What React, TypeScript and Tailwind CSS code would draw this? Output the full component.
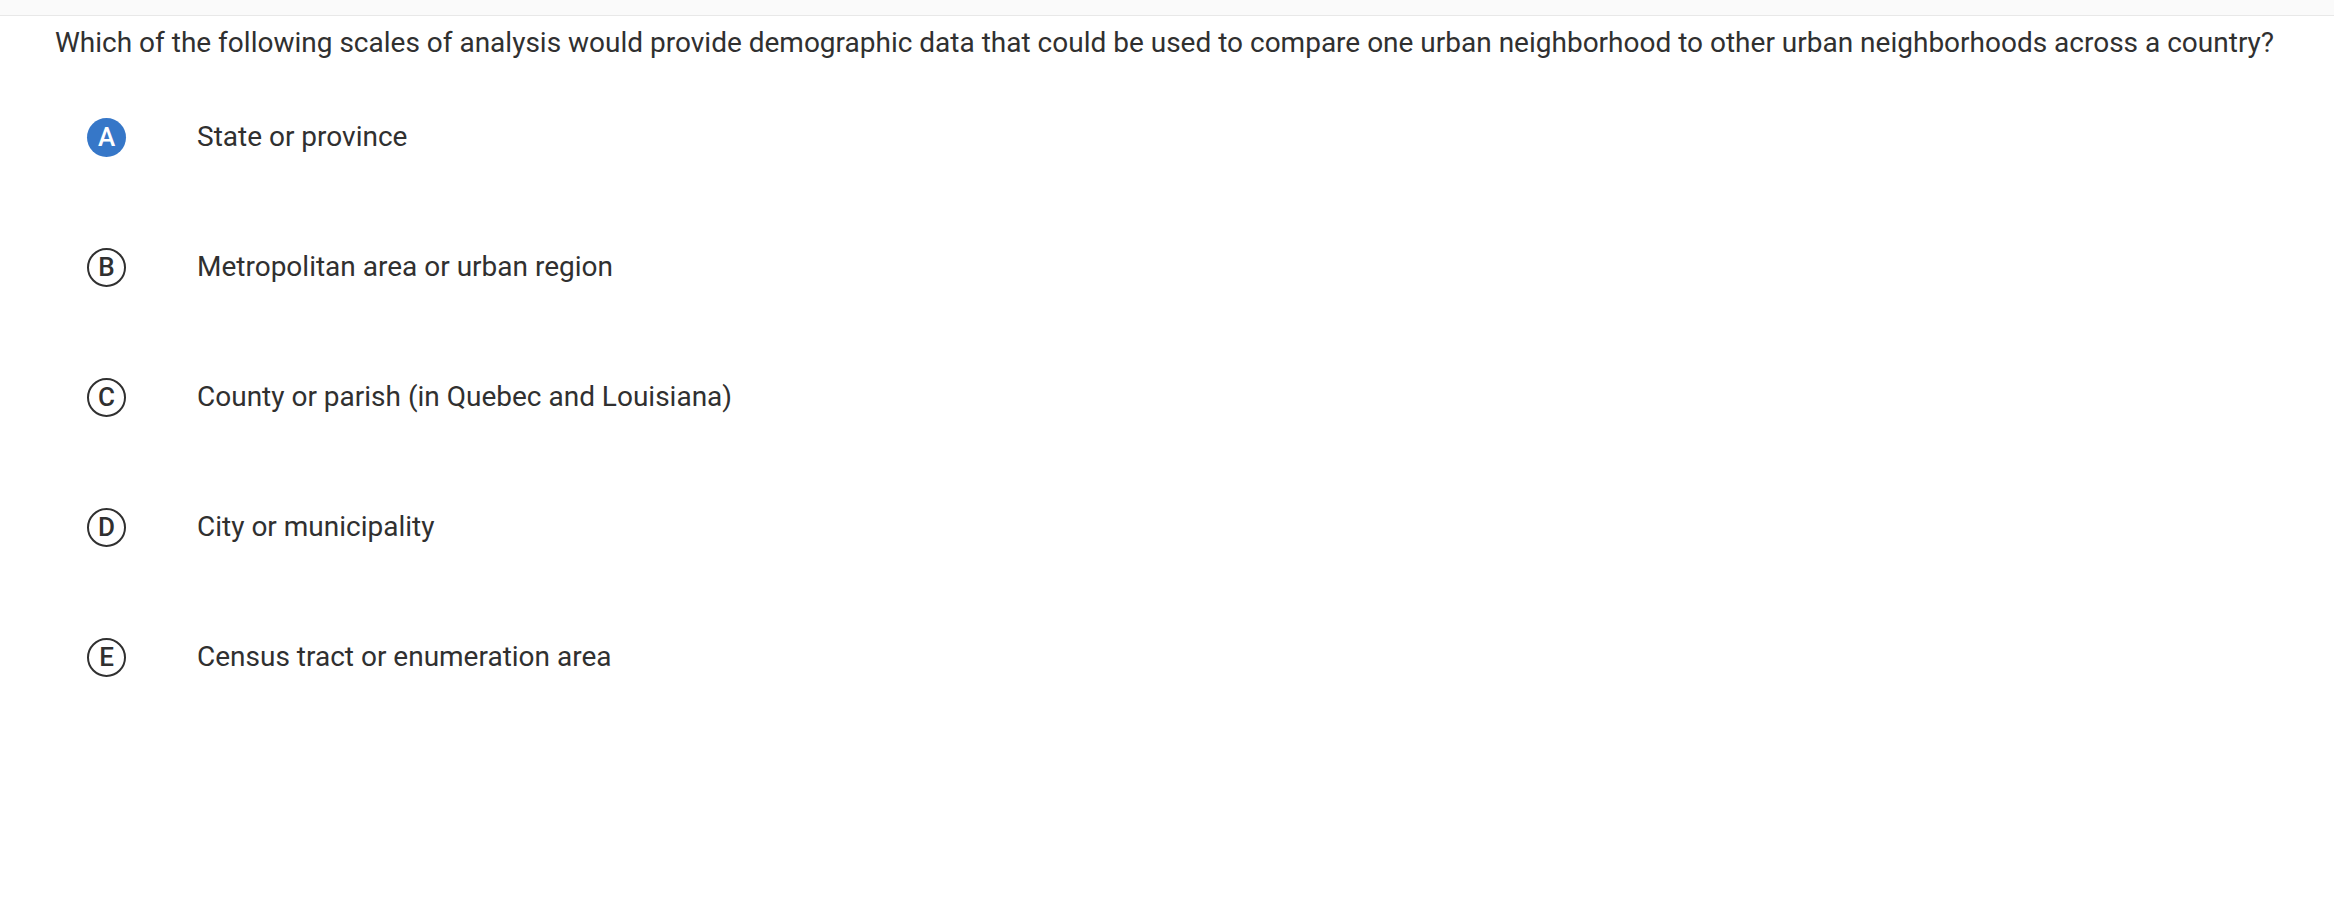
import React from "react";

const options = [
  { letter: "A", text: "State or province", selected: true },
  { letter: "B", text: "Metropolitan area or urban region", selected: false },
  { letter: "C", text: "County or parish (in Quebec and Louisiana)", selected: false },
  { letter: "D", text: "City or municipality", selected: false },
  { letter: "E", text: "Census tract or enumeration area", selected: false },
];

export default function App() {
  return (
    <div
      className="w-[2334px] h-[902px] bg-white text-[#303030] overflow-hidden"
      style={{ fontFamily: "Roboto, 'Noto Sans', sans-serif" }}
    >
      <div className="h-[16px] bg-[#fafafa] border-b border-[#e8e8e8]" />
      <div className="pt-[9px] pl-[55px]">
        <p className="text-[28px] leading-[36px]">
          Which of the following scales of analysis would provide demographic data that could be used to compare one urban neighborhood to other urban neighborhoods across a country?
        </p>
      </div>
      <div className="mt-[11px] flex flex-col">
        {options.map((o) => (
          <div key={o.letter} className="h-[130px] flex items-center">
            <div className="w-[197px] pl-[87px] flex items-center">
              {o.selected ? (
                <div className="w-[39px] h-[39px] rounded-full bg-[#3677c8] text-white flex items-center justify-center text-[26px] font-medium leading-none">
                  {o.letter}
                </div>
              ) : (
                <div className="w-[39px] h-[39px] rounded-full border-2 border-[#303030] text-[#303030] flex items-center justify-center text-[26px] font-medium leading-none">
                  {o.letter}
                </div>
              )}
            </div>
            <span className="text-[28px] leading-[36px]">{o.text}</span>
          </div>
        ))}
      </div>
    </div>
  );
}
